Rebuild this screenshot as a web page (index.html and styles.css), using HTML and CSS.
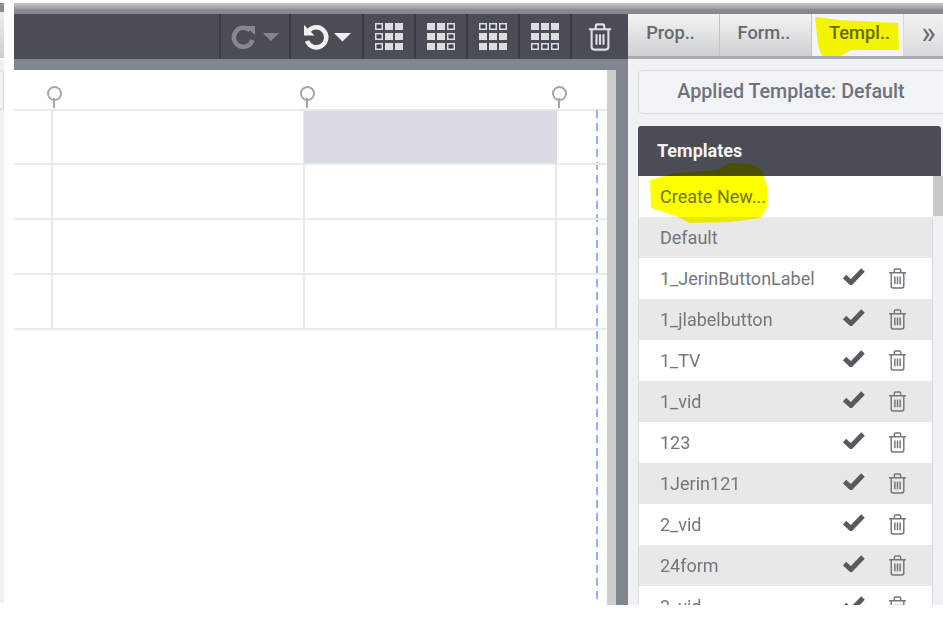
FILE: index.html
```html
<!DOCTYPE html>
<html lang="en">
<head>
<meta charset="utf-8">
<title>Templates</title>
<link rel="stylesheet" href="styles.css">
</head>
<body>
<svg class="defs" width="0" height="0" aria-hidden="true">
  <defs>
    <g id="cells">
      <rect x="0" y="0" width="8" height="7"/><rect x="10" y="0" width="8" height="7"/><rect x="20" y="0" width="8" height="7"/>
      <rect x="0" y="10" width="8" height="7"/><rect x="10" y="10" width="8" height="7"/><rect x="20" y="10" width="8" height="7"/>
      <rect x="0" y="20" width="8" height="7"/><rect x="10" y="20" width="8" height="7"/><rect x="20" y="20" width="8" height="7"/>
    </g>
    <g id="tick"><path d="M1.5 9.5 L8 15.5 L20 3" fill="none" stroke-width="5"/></g>
    <g id="bin">
      <path d="M1 4.5H17M6 4.5V2.2Q6 1 7.2 1H10.8Q12 1 12 2.2V4.5M3 4.5V17.2Q3 19 4.8 19H13.2Q15 19 15 17.2V4.5M6.5 8V15.5M9 8V15.5M11.5 8V15.5" fill="none"/>
    </g>
  </defs>
</svg>
<div class="app">
  <div class="sliver">
    <div class="sliver-top"></div>
    <div class="sliver-tab"></div>
    <div class="sliver-body"><div class="sliver-box"></div></div>
  </div>
  <div class="workspace">
    <div class="strip"></div>
    <div class="body">
      <main class="editor">
        <div class="toolbar">
          <div class="tool tool-redo">
            <svg width="48" height="26" viewBox="0 0 48 26"><path class="redo-arc" d="M19 6.5A9.5 9.5 0 1 0 21.5 16"/><path class="redo-head" d="M14.5 2L24 2V11Z"/><path class="redo-head" d="M32 9H48L40 17Z"/></svg>
          </div>
          <div class="tool tool-undo">
            <svg width="50" height="28" viewBox="0 0 50 28"><path class="undo-arc" d="M7 7.5A10 10 0 1 1 5 18"/><path class="undo-head" d="M2 2V12.5H12.5Z"/><path class="undo-head" d="M32 10H49L40.500 18.500Z"/></svg>
          </div>
          <div class="tool tool-grid"><svg class="grid-icon" width="28" height="27" viewBox="0 0 28 27"><use href="#cells"/><rect class="on" x="1.500" y="1.500" width="5" height="4"/><rect class="on" x="1.500" y="11.500" width="5" height="4"/><rect class="on" x="1.500" y="21.500" width="5" height="4"/></svg></div>
          <div class="tool tool-grid"><svg class="grid-icon" width="28" height="27" viewBox="0 0 28 27"><use href="#cells"/><rect class="on" x="21.500" y="1.500" width="5" height="4"/><rect class="on" x="21.500" y="11.500" width="5" height="4"/><rect class="on" x="21.500" y="21.500" width="5" height="4"/></svg></div>
          <div class="tool tool-grid"><svg class="grid-icon" width="28" height="27" viewBox="0 0 28 27"><use href="#cells"/><rect class="on" x="1.500" y="1.500" width="5" height="4"/><rect class="on" x="11.500" y="1.500" width="5" height="4"/><rect class="on" x="21.500" y="1.500" width="5" height="4"/></svg></div>
          <div class="tool tool-grid"><svg class="grid-icon" width="28" height="27" viewBox="0 0 28 27"><use href="#cells"/><rect class="on" x="1.500" y="21.500" width="5" height="4"/><rect class="on" x="11.500" y="21.500" width="5" height="4"/><rect class="on" x="21.500" y="21.500" width="5" height="4"/></svg></div>
          <div class="tool tool-trash">
            <svg width="26" height="28" viewBox="0 0 18 20"><use href="#bin"/></svg>
          </div>
        </div>
        <div class="substrip"></div>
        <div class="canvas-row">
          <div class="canvas">
            <div class="guide"></div>
            <div class="table">
              <div class="cell edge"></div><div class="cell"><span class="pin"></span></div><div class="cell selected"><span class="pin"></span></div><div class="cell last"><span class="pin"></span></div>
              <div class="cell edge"></div><div class="cell"></div><div class="cell"></div><div class="cell last"></div>
              <div class="cell edge"></div><div class="cell"></div><div class="cell"></div><div class="cell last"></div>
              <div class="cell edge"></div><div class="cell"></div><div class="cell"></div><div class="cell last"></div>
            </div>
          </div>
          <div class="scroll"></div>
          <div class="divider"></div>
        </div>
      </main>
      <aside class="panel">
        <nav class="tabs">
          <div class="tab tab-prop">Prop..</div>
          <div class="tab tab-form">Form..</div>
          <div class="tab tab-templ active">Templ..</div>
          <div class="tab more">»</div>
        </nav>
        <div class="panel-body">
          <div class="applied">Applied Template: Default</div>
          <section class="templates">
            <h2 class="templates-head">Templates</h2>
            <div class="list">
              <div class="list-scroll"></div>
              <div class="row plain"><span class="name">Create New...</span></div>
              <div class="row alt"><span class="name">Default</span></div>
              <div class="row"><span class="name">1_JerinButtonLabel</span><svg class="check" width="22" height="18" viewBox="0 0 22 18"><use href="#tick"/></svg><svg class="del" width="19" height="21" viewBox="0 0 18 20"><use href="#bin"/></svg></div>
              <div class="row alt"><span class="name">1_jlabelbutton</span><svg class="check" width="22" height="18" viewBox="0 0 22 18"><use href="#tick"/></svg><svg class="del" width="19" height="21" viewBox="0 0 18 20"><use href="#bin"/></svg></div>
              <div class="row"><span class="name">1_TV</span><svg class="check" width="22" height="18" viewBox="0 0 22 18"><use href="#tick"/></svg><svg class="del" width="19" height="21" viewBox="0 0 18 20"><use href="#bin"/></svg></div>
              <div class="row alt"><span class="name">1_vid</span><svg class="check" width="22" height="18" viewBox="0 0 22 18"><use href="#tick"/></svg><svg class="del" width="19" height="21" viewBox="0 0 18 20"><use href="#bin"/></svg></div>
              <div class="row"><span class="name">123</span><svg class="check" width="22" height="18" viewBox="0 0 22 18"><use href="#tick"/></svg><svg class="del" width="19" height="21" viewBox="0 0 18 20"><use href="#bin"/></svg></div>
              <div class="row alt"><span class="name">1Jerin121</span><svg class="check" width="22" height="18" viewBox="0 0 22 18"><use href="#tick"/></svg><svg class="del" width="19" height="21" viewBox="0 0 18 20"><use href="#bin"/></svg></div>
              <div class="row"><span class="name">2_vid</span><svg class="check" width="22" height="18" viewBox="0 0 22 18"><use href="#tick"/></svg><svg class="del" width="19" height="21" viewBox="0 0 18 20"><use href="#bin"/></svg></div>
              <div class="row alt"><span class="name">24form</span><svg class="check" width="22" height="18" viewBox="0 0 22 18"><use href="#tick"/></svg><svg class="del" width="19" height="21" viewBox="0 0 18 20"><use href="#bin"/></svg></div>
              <div class="row"><span class="name">3_vid</span><svg class="check" width="22" height="18" viewBox="0 0 22 18"><use href="#tick"/></svg><svg class="del" width="19" height="21" viewBox="0 0 18 20"><use href="#bin"/></svg></div>
            </div>
          </section>
        </div>
      </aside>
    </div>
  </div>
  <svg class="marker" width="943" height="624" viewBox="0 0 943 624" aria-hidden="true">
    <path d="M815 17L840 20L898 23L899 50L852 50L840 56L822 56L818 45Z"/>
    <path d="M650 180L675 173L718 170L728 163L750 164L762 170L767 187L767 207L760 218L730 222L690 223L678 217L651 208Z"/>
  </svg>
</div>
</body>
</html>
```
FILE: styles.css
```css
* { box-sizing: border-box; }
html, body { margin: 0; padding: 0; background: #fff; }
body { width: 943px; height: 624px; overflow: hidden; font-family: Roboto, "Liberation Sans", sans-serif; }
.defs { position: absolute; }
.app { position: relative; display: flex; width: 943px; height: 605px; padding-top: 3px; overflow: hidden; filter: blur(0.55px); }

.sliver { flex: 0 0 14px; display: flex; flex-direction: column; }
.sliver-top { height: 9px; width: 4px; background: #8b8e96; }
.sliver-tab { height: 46px; width: 4px; background: linear-gradient(#ececec, #cfcfcf); }
.sliver-body { flex: 1; width: 4px; margin-top: 2px; background: #f0f1f5; padding-top: 10px; margin-bottom: 2px; }
.sliver-box { height: 40px; border: 1px solid #d6d7da; border-left: 0; border-radius: 0 3px 3px 0; }

.workspace { flex: 1; display: flex; flex-direction: column; min-width: 0; }
.strip { flex: 0 0 11px; background: linear-gradient(#c9cace, #85888f 70%); }
.body { flex: 1; display: flex; min-height: 0; }

.editor { flex: 0 0 614px; display: flex; flex-direction: column; }
.toolbar { flex: 0 0 45px; display: flex; justify-content: flex-end; background: #4a4d55; }
.tool { display: flex; align-items: center; justify-content: center; border-left: 2px solid #3a3c43; }
.tool-redo { width: 70px; }
.tool-undo { width: 73px; }
.tool-grid { width: 52px; }
.tool-trash { width: 58px; }
.redo-arc { fill: none; stroke: #85878c; stroke-width: 4.5; }
.redo-head { fill: #85878c; }
.undo-arc { fill: none; stroke: #f1f1f1; stroke-width: 4.5; }
.undo-head { fill: #f1f1f1; }
.grid-icon { fill: #dcdddf; }
.grid-icon .on { fill: #3e4650; }
.tool-trash svg { stroke: #dfe0e3; stroke-width: 1.5; }

.substrip { flex: 0 0 11px; background: #82868f; }
.canvas-row { flex: 1; display: flex; min-height: 0; }
.canvas { position: relative; flex: 0 0 593px; background: #fff; padding-top: 39px; }
.scroll { flex: 0 0 9px; background: #cdcdcd; }
.divider { flex: 1; background: #81858e; }
.guide { position: absolute; left: 582px; top: 40px; bottom: 4px; width: 2px; background: repeating-linear-gradient(#8db3fb 0 8px, transparent 8px 13px); }

.table { display: grid; grid-template-columns: 39px 252px 252px 50px; grid-template-rows: 54px 55px 55px 55px; border-top: 2px solid #e9eaec; }
.cell { position: relative; border-bottom: 2px solid #e9eaec; border-right: 2px solid #e9eaec; }
.cell.last { border-right: 0; }
.cell.selected { background: #d9dce4; border-right-color: transparent; margin-left: -1px; }
.pin { position: absolute; left: -6px; top: -25px; width: 15px; height: 15px; border: 2.500px solid #a3a5ab; border-radius: 50%; background: #fff; }
.pin::after { content: ""; position: absolute; left: 4px; top: 10px; width: 2px; height: 10px; background: #a3a5ab; }
.cell.selected .pin { left: -4px; }
.cell.last .pin { left: -5px; }

.panel { flex: 1; display: flex; flex-direction: column; min-width: 0; background: #f0f1f5; }
.tabs { flex: 0 0 42px; display: flex; background: #c9cacd; }
.tab { flex: 0 0 92px; display: flex; align-items: center; justify-content: center; padding-bottom: 5px; font-size: 18.300px; font-weight: 500; color: #666a72; background: linear-gradient(#f3f3f3, #cfd0d2); border-right: 1px solid #c2c3c6; }
.tab-prop { padding-right: 6px; }
.tab-form { padding-right: 3px; }
.tab-templ { padding-left: 4px; }
.tab.active { background: #f3f4f6; border-right: 1px solid #d8d9db; }
.tab.more { flex: 1; padding-left: 10px; font-size: 31px; font-weight: 400; border-right: 0; background: linear-gradient(#f3f3f3, #d9dadc); }
.panel-body { flex: 1; min-height: 0; padding: 11px 0 0 10px; border-top: 3px solid #a8aab0; }
.applied { height: 44px; display: flex; align-items: center; justify-content: center; padding-bottom: 2px; font-size: 19.700px; font-weight: 500; color: #6e727a; background: #f2f3f6; border: 1px solid #d9dadd; border-right: 0; border-radius: 5px 0 0 5px; }
.templates { margin-top: 12px; }
.templates-head { margin: 0; height: 50px; width: 303px; display: flex; align-items: center; padding: 0 0 1px 19px; font-size: 18px; font-weight: 700; color: #f5f5f7; background: #4a4d55; border-radius: 3px 3px 0 0; }
.list { position: relative; width: 305px; border-left: 1px solid #dcdde2; }
.list-scroll { position: absolute; right: 0; top: 0; width: 10px; height: 40px; background: #c9c9c9; }
.row { display: flex; align-items: center; width: 294px; height: 41px; padding-left: 21px; background: #fff; border-right: 1px solid #d9dadf; }
.row.alt { background: #e8e8e8; }
.row.plain { border-right: 0; }
.name { flex: 0 0 183px; font-size: 18px; color: #73767c; white-space: nowrap; }
.check { stroke: #585a5f; margin-top: -6px; }
.del { stroke: #74767c; stroke-width: 1.4; margin-left: 23px; }

.marker { position: absolute; left: 0; top: 0; fill: #ffff00; mix-blend-mode: multiply; pointer-events: none; }
```
